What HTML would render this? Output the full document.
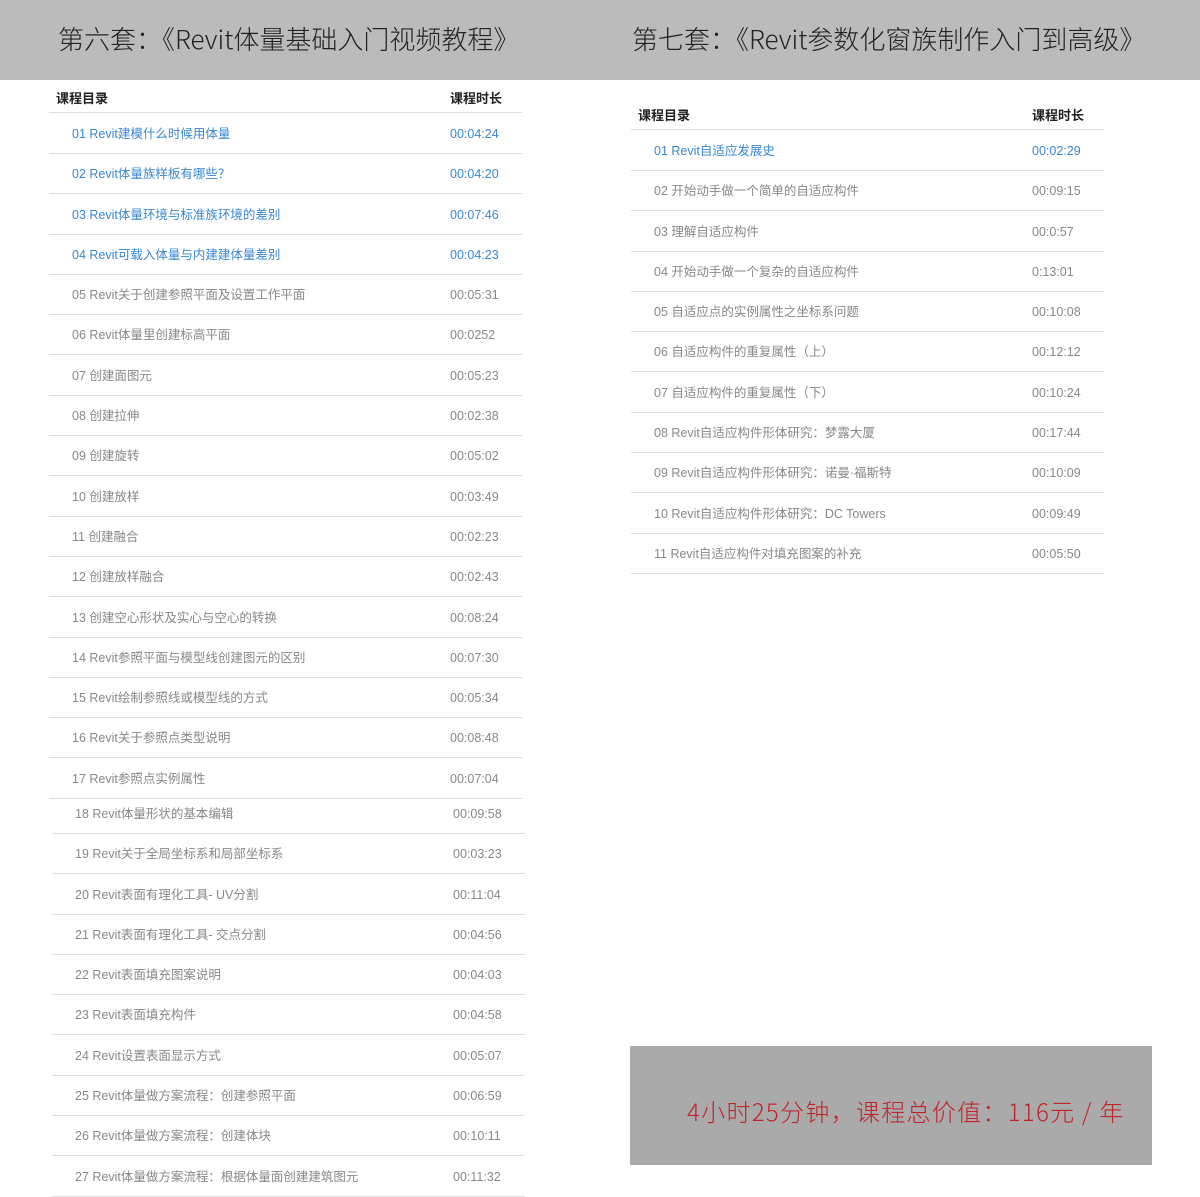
<!DOCTYPE html>
<html><head><meta charset="utf-8"><style>
*{margin:0;padding:0;box-sizing:border-box}
body{width:1200px;height:1187px;position:relative;background:#fff;font-family:"Liberation Sans","Noto Sans CJK SC",sans-serif;overflow:hidden}
.band{position:absolute;left:0;top:0;width:1200px;height:80px;background:#bbbbbb}
.t{position:absolute;top:20px;font-size:26px;color:#222;font-weight:300;white-space:nowrap;letter-spacing:0px;font-family:"Noto Sans CJK SC","Liberation Sans",sans-serif}
.h{position:absolute;font-size:13px;font-weight:bold;color:#222;font-family:"Noto Sans CJK SC",sans-serif}
.w{position:absolute;left:0;top:1px;width:1200px;height:1187px}
.r{position:absolute;height:40px;border-bottom:1px solid #dddddd;font-size:12.5px;color:#888;line-height:40px;white-space:nowrap;font-family:"Liberation Sans","Noto Sans CJK SC",sans-serif}
.r span{position:absolute;top:0}
.b{color:#3a87d0}
.box{position:absolute;left:630px;top:1046px;width:522px;height:119px;background:#aaaaaa}
.box div{position:absolute;left:57px;top:47px;font-size:24px;color:#c0242a;white-space:nowrap;letter-spacing:1.3px;font-family:"Noto Sans CJK SC","Liberation Sans",sans-serif;font-weight:300}
</style></head><body>
<div class="band"></div>
<div class="t" style="left:58px">第六套：《Revit体量基础入门视频教程》</div>
<div class="t" style="left:632px">第七套：《Revit参数化窗族制作入门到高级》</div>
<div class="w">
<div class="h" style="left:56px;top:87px">课程目录</div>
<div class="h" style="left:450px;top:87px">课程时长</div>
<div class="r" style="left:49px;width:473px;top:72px"></div>

<div class="r b" style="left:49px;width:473px;top:113px"><span style="left:23px">01 Revit建模什么时候用体量</span><span style="left:401px">00:04:24</span></div>
<div class="r b" style="left:49px;width:473px;top:153px"><span style="left:23px">02 Revit体量族样板有哪些？</span><span style="left:401px">00:04:20</span></div>
<div class="r b" style="left:49px;width:473px;top:194px"><span style="left:23px">03 Revit体量环境与标准族环境的差别</span><span style="left:401px">00:07:46</span></div>
<div class="r b" style="left:49px;width:473px;top:234px"><span style="left:23px">04 Revit可载入体量与内建建体量差别</span><span style="left:401px">00:04:23</span></div>
<div class="r" style="left:49px;width:473px;top:274px"><span style="left:23px">05 Revit关于创建参照平面及设置工作平面</span><span style="left:401px">00:05:31</span></div>
<div class="r" style="left:49px;width:473px;top:314px"><span style="left:23px">06 Revit体量里创建标高平面</span><span style="left:401px">00:0252</span></div>
<div class="r" style="left:49px;width:473px;top:355px"><span style="left:23px">07 创建面图元</span><span style="left:401px">00:05:23</span></div>
<div class="r" style="left:49px;width:473px;top:395px"><span style="left:23px">08 创建拉伸</span><span style="left:401px">00:02:38</span></div>
<div class="r" style="left:49px;width:473px;top:435px"><span style="left:23px">09 创建旋转</span><span style="left:401px">00:05:02</span></div>
<div class="r" style="left:49px;width:473px;top:476px"><span style="left:23px">10 创建放样</span><span style="left:401px">00:03:49</span></div>
<div class="r" style="left:49px;width:473px;top:516px"><span style="left:23px">11 创建融合</span><span style="left:401px">00:02:23</span></div>
<div class="r" style="left:49px;width:473px;top:556px"><span style="left:23px">12 创建放样融合</span><span style="left:401px">00:02:43</span></div>
<div class="r" style="left:49px;width:473px;top:597px"><span style="left:23px">13 创建空心形状及实心与空心的转换</span><span style="left:401px">00:08:24</span></div>
<div class="r" style="left:49px;width:473px;top:637px"><span style="left:23px">14 Revit参照平面与模型线创建图元的区别</span><span style="left:401px">00:07:30</span></div>
<div class="r" style="left:49px;width:473px;top:677px"><span style="left:23px">15 Revit绘制参照线或模型线的方式</span><span style="left:401px">00:05:34</span></div>
<div class="r" style="left:49px;width:473px;top:717px"><span style="left:23px">16 Revit关于参照点类型说明</span><span style="left:401px">00:08:48</span></div>
<div class="r" style="left:49px;width:473px;top:758px"><span style="left:23px">17 Revit参照点实例属性</span><span style="left:401px">00:07:04</span></div>

<div class="r" style="left:52px;width:473px;top:793px"><span style="left:23px">18 Revit体量形状的基本编辑</span><span style="left:401px">00:09:58</span></div>
<div class="r" style="left:52px;width:473px;top:833px"><span style="left:23px">19 Revit关于全局坐标系和局部坐标系</span><span style="left:401px">00:03:23</span></div>
<div class="r" style="left:52px;width:473px;top:874px"><span style="left:23px">20 Revit表面有理化工具- UV分割</span><span style="left:401px">00:11:04</span></div>
<div class="r" style="left:52px;width:473px;top:914px"><span style="left:23px">21 Revit表面有理化工具- 交点分割</span><span style="left:401px">00:04:56</span></div>
<div class="r" style="left:52px;width:473px;top:954px"><span style="left:23px">22 Revit表面填充图案说明</span><span style="left:401px">00:04:03</span></div>
<div class="r" style="left:52px;width:473px;top:994px"><span style="left:23px">23 Revit表面填充构件</span><span style="left:401px">00:04:58</span></div>
<div class="r" style="left:52px;width:473px;top:1035px"><span style="left:23px">24 Revit设置表面显示方式</span><span style="left:401px">00:05:07</span></div>
<div class="r" style="left:52px;width:473px;top:1075px"><span style="left:23px">25 Revit体量做方案流程：创建参照平面</span><span style="left:401px">00:06:59</span></div>
<div class="r" style="left:52px;width:473px;top:1115px"><span style="left:23px">26 Revit体量做方案流程：创建体块</span><span style="left:401px">00:10:11</span></div>
<div class="r" style="left:52px;width:473px;top:1156px"><span style="left:23px">27 Revit体量做方案流程：根据体量面创建建筑图元</span><span style="left:401px">00:11:32</span></div>

<div class="h" style="left:638px;top:104px">课程目录</div>
<div class="h" style="left:1032px;top:104px">课程时长</div>
<div class="r" style="left:631px;width:473px;top:89px"></div>
<div class="r b" style="left:631px;width:473px;top:130px"><span style="left:23px">01 Revit自适应发展史</span><span style="left:401px">00:02:29</span></div>
<div class="r" style="left:631px;width:473px;top:170px"><span style="left:23px">02 开始动手做一个简单的自适应构件</span><span style="left:401px">00:09:15</span></div>
<div class="r" style="left:631px;width:473px;top:211px"><span style="left:23px">03 理解自适应构件</span><span style="left:401px">00:0:57</span></div>
<div class="r" style="left:631px;width:473px;top:251px"><span style="left:23px">04 开始动手做一个复杂的自适应构件</span><span style="left:401px">0:13:01</span></div>
<div class="r" style="left:631px;width:473px;top:291px"><span style="left:23px">05 自适应点的实例属性之坐标系问题</span><span style="left:401px">00:10:08</span></div>
<div class="r" style="left:631px;width:473px;top:331px"><span style="left:23px">06 自适应构件的重复属性（上）</span><span style="left:401px">00:12:12</span></div>
<div class="r" style="left:631px;width:473px;top:372px"><span style="left:23px">07 自适应构件的重复属性（下）</span><span style="left:401px">00:10:24</span></div>
<div class="r" style="left:631px;width:473px;top:412px"><span style="left:23px">08 Revit自适应构件形体研究：梦露大厦</span><span style="left:401px">00:17:44</span></div>
<div class="r" style="left:631px;width:473px;top:452px"><span style="left:23px">09 Revit自适应构件形体研究：诺曼·福斯特</span><span style="left:401px">00:10:09</span></div>
<div class="r" style="left:631px;width:473px;top:493px"><span style="left:23px">10 Revit自适应构件形体研究：DC Towers</span><span style="left:401px">00:09:49</span></div>
<div class="r" style="left:631px;width:473px;top:533px"><span style="left:23px">11 Revit自适应构件对填充图案的补充</span><span style="left:401px">00:05:50</span></div>
</div>
<div class="box"><div>4小时25分钟，课程总价值：116元 / 年</div></div>
</body></html>
